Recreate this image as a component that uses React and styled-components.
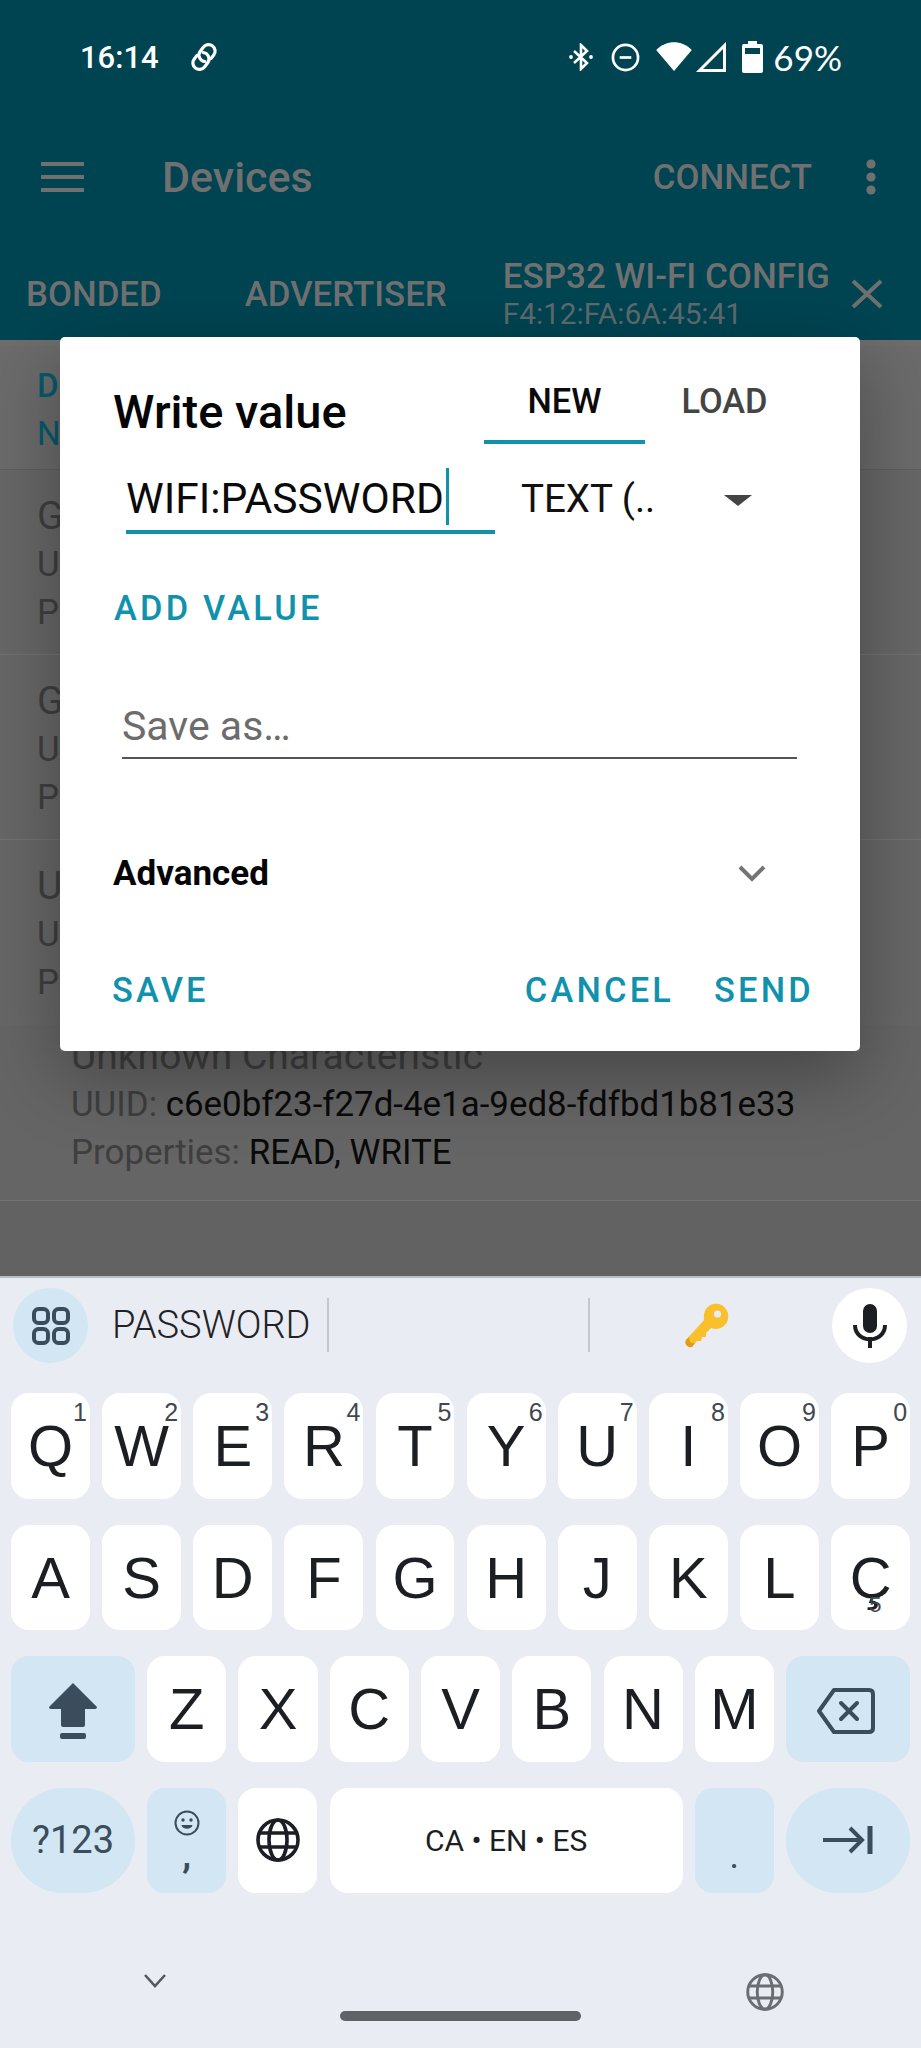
import React from 'react'
import styled, { createGlobalStyle } from 'styled-components'

const TEAL = '#1092ad'
const DIM = '#707070'
const KEY_INK = '#1b1f23'
const FN_INK = '#3b4c5c'

const Global = createGlobalStyle`
  html, body { margin: 0; padding: 0; background: #e9ecf2; }
  * { box-sizing: border-box; }
`

const Phone = styled.div`
  position: relative;
  width: 921px;
  height: 2048px;
  overflow: hidden;
  display: flex;
  flex-direction: column;
  font-family: Roboto, "Liberation Sans", sans-serif;
`

const Header = styled.header`
  background: #004452;
  height: 340px;
  flex: none;
  display: flex;
  flex-direction: column;
`

const StatusBar = styled.div`
  height: 114px;
  padding: 0 79px 0 80px;
  display: flex;
  align-items: center;
  justify-content: space-between;
  color: #fff;
`

const StatusGroup = styled.div`
  display: flex;
  align-items: center;
`

const StatusIcon = styled.span`
  display: flex;
  margin-left: ${p => p.$gap || 0}px;
`

const Clock = styled.span`
  font-size: 31px;
  font-weight: 500;
  margin-right: 30px;
`

const Battery = styled.span`
  font-family: Lato, Roboto, sans-serif;
  font-size: 35px;
  font-weight: 400;
  margin-left: 10px;
`

const AppBar = styled.div`
  height: 126px;
  padding: 0 45px 0 41px;
  display: flex;
  align-items: center;
  color: ${DIM};
`

const Title = styled.h1`
  margin: 0 0 0 78px;
  font-size: 43px;
  font-weight: 500;
  flex: 1;
`

const ActionLabel = styled.span`
  font-size: 34.8px;
  font-weight: 500;
  margin-right: 54px;
`

const TabBar = styled.div`
  height: 100px;
  display: flex;
  align-items: center;
  padding: 8px 0 0 26px;
  color: ${DIM};
`

const Tab = styled.span`
  font-size: 34.8px;
  font-weight: 500;
  margin-right: ${p => p.$gap}px;
  white-space: nowrap;
`

const DeviceTab = styled.div`
  display: flex;
  flex-direction: column;
  width: 347px;
`

const DeviceName = styled.span`
  font-size: 35px;
  font-weight: 500;
  white-space: nowrap;
  line-height: 40px;
`

const DeviceAddress = styled.span`
  font-size: 29.8px;
  line-height: 34px;
  color: #5f6a6d;
`

const Content = styled.main`
  flex: 1;
  background: #626262;
  display: flex;
  flex-direction: column;
  border-top: 6px solid #6d6d6d;
`

const Banner = styled.div`
  height: 124px;
  padding: 16px 0 0 37px;
  background: #6b6b6b;
  color: #045a6c;
  font-size: 33px;
  line-height: 48px;
  font-weight: 500;
  border-bottom: 1px solid #5f5f5f;
`

const BannerSub = styled.div`
  font-weight: 400;
`

const ServiceRow = styled.section`
  height: ${p => p.$height || 185}px;
  padding: ${p => p.$top || 22}px 0 0 ${p => p.$indent || 37}px;
  font-size: 34.9px;
  line-height: 48.5px;
  color: #3f3f3f;
  background: ${p => p.$bg || '#676767'};
  border-bottom: ${p => p.$line ? '1px solid #727272' : 'none'};
  white-space: nowrap;
`

const RowName = styled.div`
  font-size: 39px;
`

const RowValue = styled.span`
  color: #0a0a0a;
`

const Shade = styled.div`
  position: absolute;
  left: 60px;
  top: 337px;
  width: 800px;
  height: 714px;
  box-shadow: 0 24px 70px rgba(0, 0, 0, 0.32);
  pointer-events: none;
`

const Dialog = styled.div`
  position: absolute;
  left: 60px;
  top: 337px;
  width: 800px;
  height: 714px;
  background: #fff;
  border-radius: 5px;
  padding: 0 48px 0 53px;
  display: flex;
  flex-direction: column;
`

const DialogHead = styled.div`
  display: flex;
  height: 107px;
`

const DialogTitle = styled.h2`
  margin: 48px 0 0 0;
  font-size: 47px;
  line-height: 54px;
  font-weight: 500;
  color: #050505;
  width: 371px;
  white-space: nowrap;
`

const DialogTab = styled.div`
  flex: none;
  width: ${p => p.$width}px;
  height: 107px;
  padding-top: 40px;
  text-align: center;
  font-size: 34.4px;
  line-height: 48px;
  font-weight: 500;
  color: ${p => p.$active ? '#0a0a0a' : '#444'};
  border-bottom: ${p => p.$active ? `4px solid ${TEAL}` : 'none'};
`

const ValueLine = styled.div`
  display: flex;
  height: 90px;
  padding-left: 13px;
`

const ValueInput = styled.div`
  position: relative;
  width: 369px;
  height: 90px;
  padding-top: 30px;
  border-bottom: 4px solid ${TEAL};
  font-size: 42.5px;
  line-height: 50px;
  color: #0a0a0a;
  white-space: nowrap;
`

const Cursor = styled.span`
  position: absolute;
  left: 320px;
  top: 24px;
  width: 3px;
  height: 57px;
  background: ${TEAL};
`

const TypeSelect = styled.div`
  position: relative;
  flex: 1;
  padding: 30px 0 0 26px;
  font-size: 38.5px;
  line-height: 50px;
  color: #111;
`

const Caret = styled.span`
  position: absolute;
  right: 60px;
  top: 51px;
  border-left: 14px solid transparent;
  border-right: 14px solid transparent;
  border-top: 11px solid #444;
`

const TextButton = styled.span`
  font-size: 34.4px;
  line-height: 40px;
  font-weight: 500;
  letter-spacing: 3.2px;
  color: ${TEAL};
  white-space: nowrap;
`

const AddRow = styled.div`
  margin-top: 54px;
  padding-left: 1px;
  height: 39px;
`

const SaveField = styled.div`
  margin: 61px 15px 0 9px;
  height: 71px;
  padding-top: 15px;
  border-bottom: 2px solid #555;
  font-size: 41px;
  line-height: 46px;
  color: #6c6c6c;
`

const AdvancedRow = styled.div`
  margin-top: 92px;
  height: 44px;
  display: flex;
  align-items: center;
  justify-content: space-between;
  font-size: 35px;
  font-weight: 700;
  color: #050505;
  padding-right: 46px;
`

const DialogActions = styled.div`
  margin-top: 75px;
  display: flex;
  align-items: center;
  gap: 40px;
  margin-left: -1px;
  margin-right: -2px;
`

const Spacer = styled.div`
  flex: 1;
`

const Keyboard = styled.div`
  flex: none;
  height: 772px;
  background: #e9ecf2;
  border-top: 2px solid #b9bcc2;
  display: flex;
  flex-direction: column;
`

const SuggestBar = styled.div`
  height: 115px;
  padding: 10px 14px 0 13px;
  display: flex;
  align-items: flex-start;
`

const RoundBtn = styled.div`
  width: 75px;
  height: 75px;
  flex: none;
  border-radius: 50%;
  background: ${p => p.$bg};
  display: flex;
  align-items: center;
  justify-content: center;
`

const Suggestion = styled.div`
  width: ${p => p.$width}px;
  height: 54px;
  margin-top: 10px;
  display: flex;
  align-items: center;
  justify-content: ${p => p.$center ? 'center' : 'flex-start'};
  padding-left: ${p => p.$center ? 0 : 24}px;
  padding-right: ${p => p.$center ? 8 : 0}px;
  border-right: ${p => p.$line ? '2px solid #c4c7cc' : 'none'};
  font-size: 38px;
  font-weight: 300;
  color: #1f2327;
  flex: ${p => p.$grow ? 1 : 'none'};
`

const KeyRows = styled.div`
  display: flex;
  flex-direction: column;
  gap: 26px;
  padding: 0 11px;
`

const KeyRow = styled.div`
  display: flex;
  gap: 12.2px;
  height: 105.5px;
`

const Key = styled.div`
  position: relative;
  flex: ${p => p.$flex || '1 1 0'};
  min-width: 0;
  background: ${p => p.$fn ? '#d2e6f3' : '#fff'};
  border-radius: ${p => p.$pill ? '53px' : '18px'};
  display: flex;
  align-items: center;
  justify-content: center;
  color: ${p => p.$fn ? FN_INK : KEY_INK};
  font-family: ${p => p.$label ? 'Roboto' : '"Liberation Sans"'}, sans-serif;
  font-size: ${p => p.$size || 58}px;
  font-weight: 400;
`

const Hint = styled.span`
  position: absolute;
  right: ${p => p.$below ? 'auto' : '3px'};
  left: ${p => p.$below ? '38px' : 'auto'};
  top: ${p => p.$below ? '67px' : '5px'};
  font-size: ${p => p.$below ? 22 : 25}px;
  font-weight: 400;
  color: #3f4850;
`

const Period = styled.span`
  margin-top: 32px;
`

const NavStrip = styled.div`
  position: relative;
  flex: 1;
  display: flex;
  align-items: flex-start;
  justify-content: space-between;
  padding: 80px 137px 0 143px;
`

const HomePill = styled.div`
  position: absolute;
  left: 340px;
  bottom: 27px;
  width: 241px;
  height: 10px;
  border-radius: 5px;
  background: #5f6368;
`

const CommaStack = styled.div`
  display: flex;
  flex-direction: column;
  align-items: center;
  gap: 4px;
  font-size: 36px;
  font-weight: 700;
  line-height: 30px;
`

// drawings

const Menu = () => (
  <svg width="43" height="30" viewBox="0 0 43 30" fill={DIM}>
    <rect width="43" height="4" />
    <rect y="13" width="43" height="4" />
    <rect y="26" width="43" height="4" />
  </svg>
)

const Dots = () => (
  <svg width="10" height="36" viewBox="0 0 10 36" fill={DIM}>
    <circle cx="5" cy="5" r="4.6" />
    <circle cx="5" cy="18" r="4.6" />
    <circle cx="5" cy="31" r="4.6" />
  </svg>
)

const Cross = () => (
  <svg width="34" height="32" viewBox="0 0 34 32" stroke={DIM} strokeWidth="4" fill="none">
    <path d="M3 3 L31 29 M31 3 L3 29" />
  </svg>
)

const LinkIcon = () => (
  <svg width="30" height="30" viewBox="0 0 30 30" fill="none" stroke="#fff" strokeWidth="3.2" strokeLinecap="round">
    <g transform="rotate(-52 15 15)">
      <path d="M12 8.5 H7.5 a6.5 6.5 0 0 0 0 13 H13 a6.5 6.5 0 0 0 5 -10" />
      <path d="M18 21.5 H22.5 a6.5 6.5 0 0 0 0 -13 H17 a6.5 6.5 0 0 0 -5 10" />
    </g>
  </svg>
)

const BluetoothIcon = () => (
  <svg width="24" height="28" viewBox="0 0 24 28" fill="none" stroke="#fff" strokeWidth="2.6">
    <path d="M5 8 L18 20 L12 26 V2 L18 8 L5 20" />
    <circle cx="2" cy="14" r="1.9" fill="#fff" stroke="none" />
    <circle cx="22" cy="14" r="1.9" fill="#fff" stroke="none" />
  </svg>
)

const DndIcon = () => (
  <svg width="29" height="29" viewBox="0 0 30 30" fill="none" stroke="#fff" strokeWidth="2.8">
    <circle cx="15" cy="15" r="13" />
    <path d="M9 15 H21" />
  </svg>
)

const WifiIcon = () => (
  <svg width="38" height="30" viewBox="0 0 38 32" fill="#fff">
    <path d="M0 8.5 C11 -2.5 27 -2.5 38 8.5 L19 31 Z" />
  </svg>
)

const SignalIcon = () => (
  <svg width="30" height="30" viewBox="0 0 30 30" fill="none" stroke="#fff" strokeWidth="3">
    <path d="M3.5 28.5 L28.5 3.5 V28.5 Z" />
  </svg>
)

const BatteryIcon = () => (
  <svg width="21" height="32" viewBox="0 0 21 32" fill="#fff">
    <path d="M6 0 H15 V3 H19 Q21 3 21 5 V30 Q21 32 19 32 H2 Q0 32 0 30 V5 Q0 3 2 3 H6 Z" />
    <rect x="3" y="7" width="15" height="6" fill="#004452" />
  </svg>
)

const ExpandIcon = () => (
  <svg width="28" height="18" viewBox="0 0 28 18" fill="none" stroke="#757575" strokeWidth="4">
    <path d="M2 3 L14 15 L26 3" />
  </svg>
)

const AppsIcon = () => (
  <svg width="38" height="38" viewBox="0 0 38 38" fill="none" stroke={FN_INK} strokeWidth="4">
    <rect x="2" y="2" width="14" height="14" rx="4.5" />
    <rect x="22" y="2" width="14" height="14" rx="4.5" />
    <rect x="2" y="22" width="14" height="14" rx="4.5" />
    <rect x="22" y="22" width="14" height="14" rx="4.5" />
  </svg>
)

const KeyEmoji = () => (
  <svg width="46" height="46" viewBox="0 0 46 46">
    <path d="M30 2 C38 0 46 8 44 17 C43 24 35 29 27 26 L22 31 L22 35 L18 35 L17 39 L13 39 L8 45 C4 46 0 42 2 38 L20 18 C19 9 23 3 30 2 Z" fill="#f9c02c" />
    <path d="M8 45 C4 46 0 42 2 38 L5 35 C5 39 7 42 11 41 Z" fill="#e39a16" />
    <circle cx="33.5" cy="12" r="3.6" fill="#e9ecf2" />
  </svg>
)

const MicIcon = () => (
  <svg width="34" height="44" viewBox="0 0 34 44">
    <rect x="10" y="0" width="14" height="29" rx="7" fill={KEY_INK} />
    <path d="M2 21 C2 40 32 40 32 21" fill="none" stroke={KEY_INK} strokeWidth="4" />
    <rect x="15" y="33" width="4" height="11" fill={KEY_INK} />
  </svg>
)

const ShiftIcon = () => (
  <svg width="48" height="56" viewBox="0 0 48 56" fill={FN_INK} style={{ marginTop: 4 }}>
    <path d="M24 0 L48 24 Q48 26 46 26 H36 V42 Q36 44 34 44 H14 Q12 44 12 42 V26 H2 Q0 26 0 24 Z" />
    <rect x="11" y="50" width="26" height="6" rx="2" />
  </svg>
)

const BackspaceIcon = () => (
  <svg width="58" height="46" viewBox="0 0 58 46" fill="none" stroke={FN_INK} strokeWidth="4" strokeLinejoin="round" style={{ marginTop: 4, marginRight: 4 }}>
    <path d="M17 2 H52 Q56 2 56 6 V40 Q56 44 52 44 H17 L2 23 Z" />
    <path d="M24 15 L40 31 M40 15 L24 31" strokeLinecap="round" />
  </svg>
)

const EnterIcon = () => (
  <svg width="50" height="30" viewBox="0 0 50 30" fill="none" stroke={FN_INK} strokeWidth="4">
    <path d="M0 15 H38 M27 3 L39 15 L27 27" />
    <path d="M47 1 V29" strokeWidth="5" />
  </svg>
)

const Globe = ({ size, color, weight }) => (
  <svg width={size} height={size} viewBox="0 0 44 44" fill="none" stroke={color} strokeWidth={weight}>
    <circle cx="22" cy="22" r="20" />
    <ellipse cx="22" cy="22" rx="9" ry="20" />
    <path d="M3 15 H41 M3 29 H41" />
  </svg>
)

const SmileIcon = () => (
  <svg width="26" height="26" viewBox="0 0 26 26" fill="none" stroke={FN_INK} strokeWidth="2">
    <circle cx="13" cy="13" r="11.5" />
    <circle cx="9" cy="10" r="1.7" fill={FN_INK} stroke="none" />
    <circle cx="17" cy="10" r="1.7" fill={FN_INK} stroke="none" />
    <path d="M7.5 15 H18.5 C18 20 8 20 7.5 15 Z" fill={FN_INK} stroke="none" />
  </svg>
)

const HideChevron = () => (
  <svg width="24" height="16" viewBox="0 0 24 16" fill="none" stroke="#55595e" strokeWidth="2.6">
    <path d="M2 2 L12 13 L22 2" />
  </svg>
)

const topRow = [['Q', '1'], ['W', '2'], ['E', '3'], ['R', '4'], ['T', '5'], ['Y', '6'], ['U', '7'], ['I', '8'], ['O', '9'], ['P', '0']]
const homeRow = ['A', 'S', 'D', 'F', 'G', 'H', 'J', 'K', 'L']
const bottomRow = ['Z', 'X', 'C', 'V', 'B', 'N', 'M']

const services = [
  { name: 'Generic Attribute', uuid: '0x1801', kind: 'PRIMARY SERVICE' },
  { name: 'Generic Access', uuid: '0x1800', kind: 'PRIMARY SERVICE' },
  { name: 'Unknown Service', uuid: '1775244d-6b43-439b-877c-060f2d9bed07', kind: 'PRIMARY SERVICE' },
]

export default function App() {
  return (
    <Phone>
      <Global />
      <Header>
        <StatusBar>
          <StatusGroup>
            <Clock>16:14</Clock>
            <LinkIcon />
          </StatusGroup>
          <StatusGroup>
            <StatusIcon><BluetoothIcon /></StatusIcon>
            <StatusIcon $gap={18}><DndIcon /></StatusIcon>
            <StatusIcon $gap={15}><WifiIcon /></StatusIcon>
            <StatusIcon $gap={3}><SignalIcon /></StatusIcon>
            <StatusIcon $gap={16}><BatteryIcon /></StatusIcon>
            <Battery>69%</Battery>
          </StatusGroup>
        </StatusBar>
        <AppBar>
          <Menu />
          <Title>Devices</Title>
          <ActionLabel>CONNECT</ActionLabel>
          <Dots />
        </AppBar>
        <TabBar>
          <Tab $gap={83}>BONDED</Tab>
          <Tab $gap={56}>ADVERTISER</Tab>
          <DeviceTab>
            <DeviceName>ESP32 WI-FI CONFIG</DeviceName>
            <DeviceAddress>F4:12:FA:6A:45:41</DeviceAddress>
          </DeviceTab>
          <Cross />
        </TabBar>
      </Header>

      <Content>
        <Banner>
          DISCONNECTED
          <BannerSub>NOT BONDED</BannerSub>
        </Banner>
        {services.map((s, i) => (
          <ServiceRow key={s.name} $line={i < 2}>
            <RowName>{s.name}</RowName>
            <div>UUID: <RowValue>{s.uuid}</RowValue></div>
            <div>{s.kind}</div>
          </ServiceRow>
        ))}
        <ServiceRow $indent={71} $top={7} $height={176} $line $bg="#656565">
          <RowName>Unknown Characteristic</RowName>
          <div>UUID: <RowValue>c6e0bf23-f27d-4e1a-9ed8-fdfbd1b81e33</RowValue></div>
          <div>Properties: <RowValue>READ, WRITE</RowValue></div>
        </ServiceRow>
      </Content>

      <Keyboard>
        <SuggestBar>
          <RoundBtn $bg="#d2e6f3"><AppsIcon /></RoundBtn>
          <Suggestion $width={241} $line>PASSWORD</Suggestion>
          <Suggestion $width={261} $line />
          <Suggestion $grow $center><KeyEmoji /></Suggestion>
          <RoundBtn $bg="#fff"><MicIcon /></RoundBtn>
        </SuggestBar>
        <KeyRows>
          <KeyRow>
            {topRow.map(([letter, num]) => (
              <Key key={letter}>{letter}<Hint>{num}</Hint></Key>
            ))}
          </KeyRow>
          <KeyRow>
            {homeRow.map(letter => <Key key={letter}>{letter}</Key>)}
            <Key>Ç<Hint $below>5</Hint></Key>
          </KeyRow>
          <KeyRow>
            <Key $fn $flex="0 0 124px"><ShiftIcon /></Key>
            {bottomRow.map(letter => <Key key={letter}>{letter}</Key>)}
            <Key $fn $flex="0 0 124px"><BackspaceIcon /></Key>
          </KeyRow>
          <KeyRow>
            <Key $fn $pill $label $flex="0 0 124px" $size={38}>?123</Key>
            <Key $fn $label $flex="0 0 79px">
              <CommaStack><SmileIcon />,</CommaStack>
            </Key>
            <Key $flex="0 0 79px"><Globe size={44} color={KEY_INK} weight={3.6} /></Key>
            <Key $label $flex="1 1 0" $size={30}>CA • EN • ES</Key>
            <Key $fn $label $flex="0 0 79px" $size={36}><Period>.</Period></Key>
            <Key $fn $pill $flex="0 0 124px"><EnterIcon /></Key>
          </KeyRow>
        </KeyRows>
        <NavStrip>
          <HideChevron />
          <Globe size={38} color="#6a6e73" weight={3.4} />
          <HomePill />
        </NavStrip>
      </Keyboard>

      <Shade />
      <Dialog>
        <DialogHead>
          <DialogTitle>Write value</DialogTitle>
          <DialogTab $active $width={161}>NEW</DialogTab>
          <DialogTab $width={159}>LOAD</DialogTab>
        </DialogHead>
        <ValueLine>
          <ValueInput>WIFI:PASSWORD<Cursor /></ValueInput>
          <TypeSelect>TEXT (..<Caret /></TypeSelect>
        </ValueLine>
        <AddRow><TextButton>ADD VALUE</TextButton></AddRow>
        <SaveField>Save as…</SaveField>
        <AdvancedRow>Advanced<ExpandIcon /></AdvancedRow>
        <DialogActions>
          <TextButton>SAVE</TextButton>
          <Spacer />
          <TextButton>CANCEL</TextButton>
          <TextButton>SEND</TextButton>
        </DialogActions>
      </Dialog>
    </Phone>
  )
}
